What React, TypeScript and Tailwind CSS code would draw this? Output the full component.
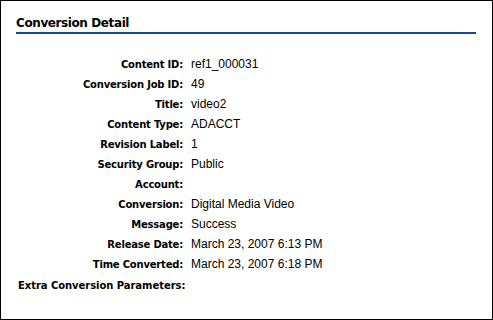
const ROWS: [string, string][] = [
  ['Content ID:', 'ref1_000031'],
  ['Conversion Job ID:', '49'],
  ['Title:', 'video2'],
  ['Content Type:', 'ADACCT'],
  ['Revision Label:', '1'],
  ['Security Group:', 'Public'],
  ['Account:', ''],
  ['Conversion:', 'Digital Media Video'],
  ['Message:', 'Success'],
  ['Release Date:', 'March 23, 2007 6:13 PM'],
  ['Time Converted:', 'March 23, 2007 6:18 PM'],
];

const labelFont = { fontFamily: '"DejaVu Sans", Tahoma, sans-serif' };
const valueFont = { fontFamily: '"Liberation Sans", Arial, sans-serif' };

export default function App() {
  return (
    <div className="w-[493px] h-[320px] bg-white border border-black text-black overflow-hidden">
      <div className="pt-[14px] px-[15px]">
        <h1 className="text-[12px] leading-[16px] font-bold tracking-[-0.4px]" style={labelFont}>
          Conversion Detail
        </h1>
        <div className="mt-[1px] h-[2px] bg-[#124c8e] w-[460px]" />
      </div>

      <div className="pt-[20px] pl-[17px]">
        {ROWS.map(([label, value]) => (
          <div key={label} className="flex items-center h-[20px]">
            <div
              className="w-[165px] text-right text-[10px] font-bold tracking-[-0.2px]"
              style={labelFont}
            >
              {label}
            </div>
            <div className="pl-[8px] text-[12px]" style={valueFont}>
              {value}
            </div>
          </div>
        ))}
        <div
          className="flex items-center h-[22px] text-[10px] font-bold tracking-[-0.05px]"
          style={labelFont}
        >
          Extra Conversion Parameters:
        </div>
      </div>
    </div>
  );
}
